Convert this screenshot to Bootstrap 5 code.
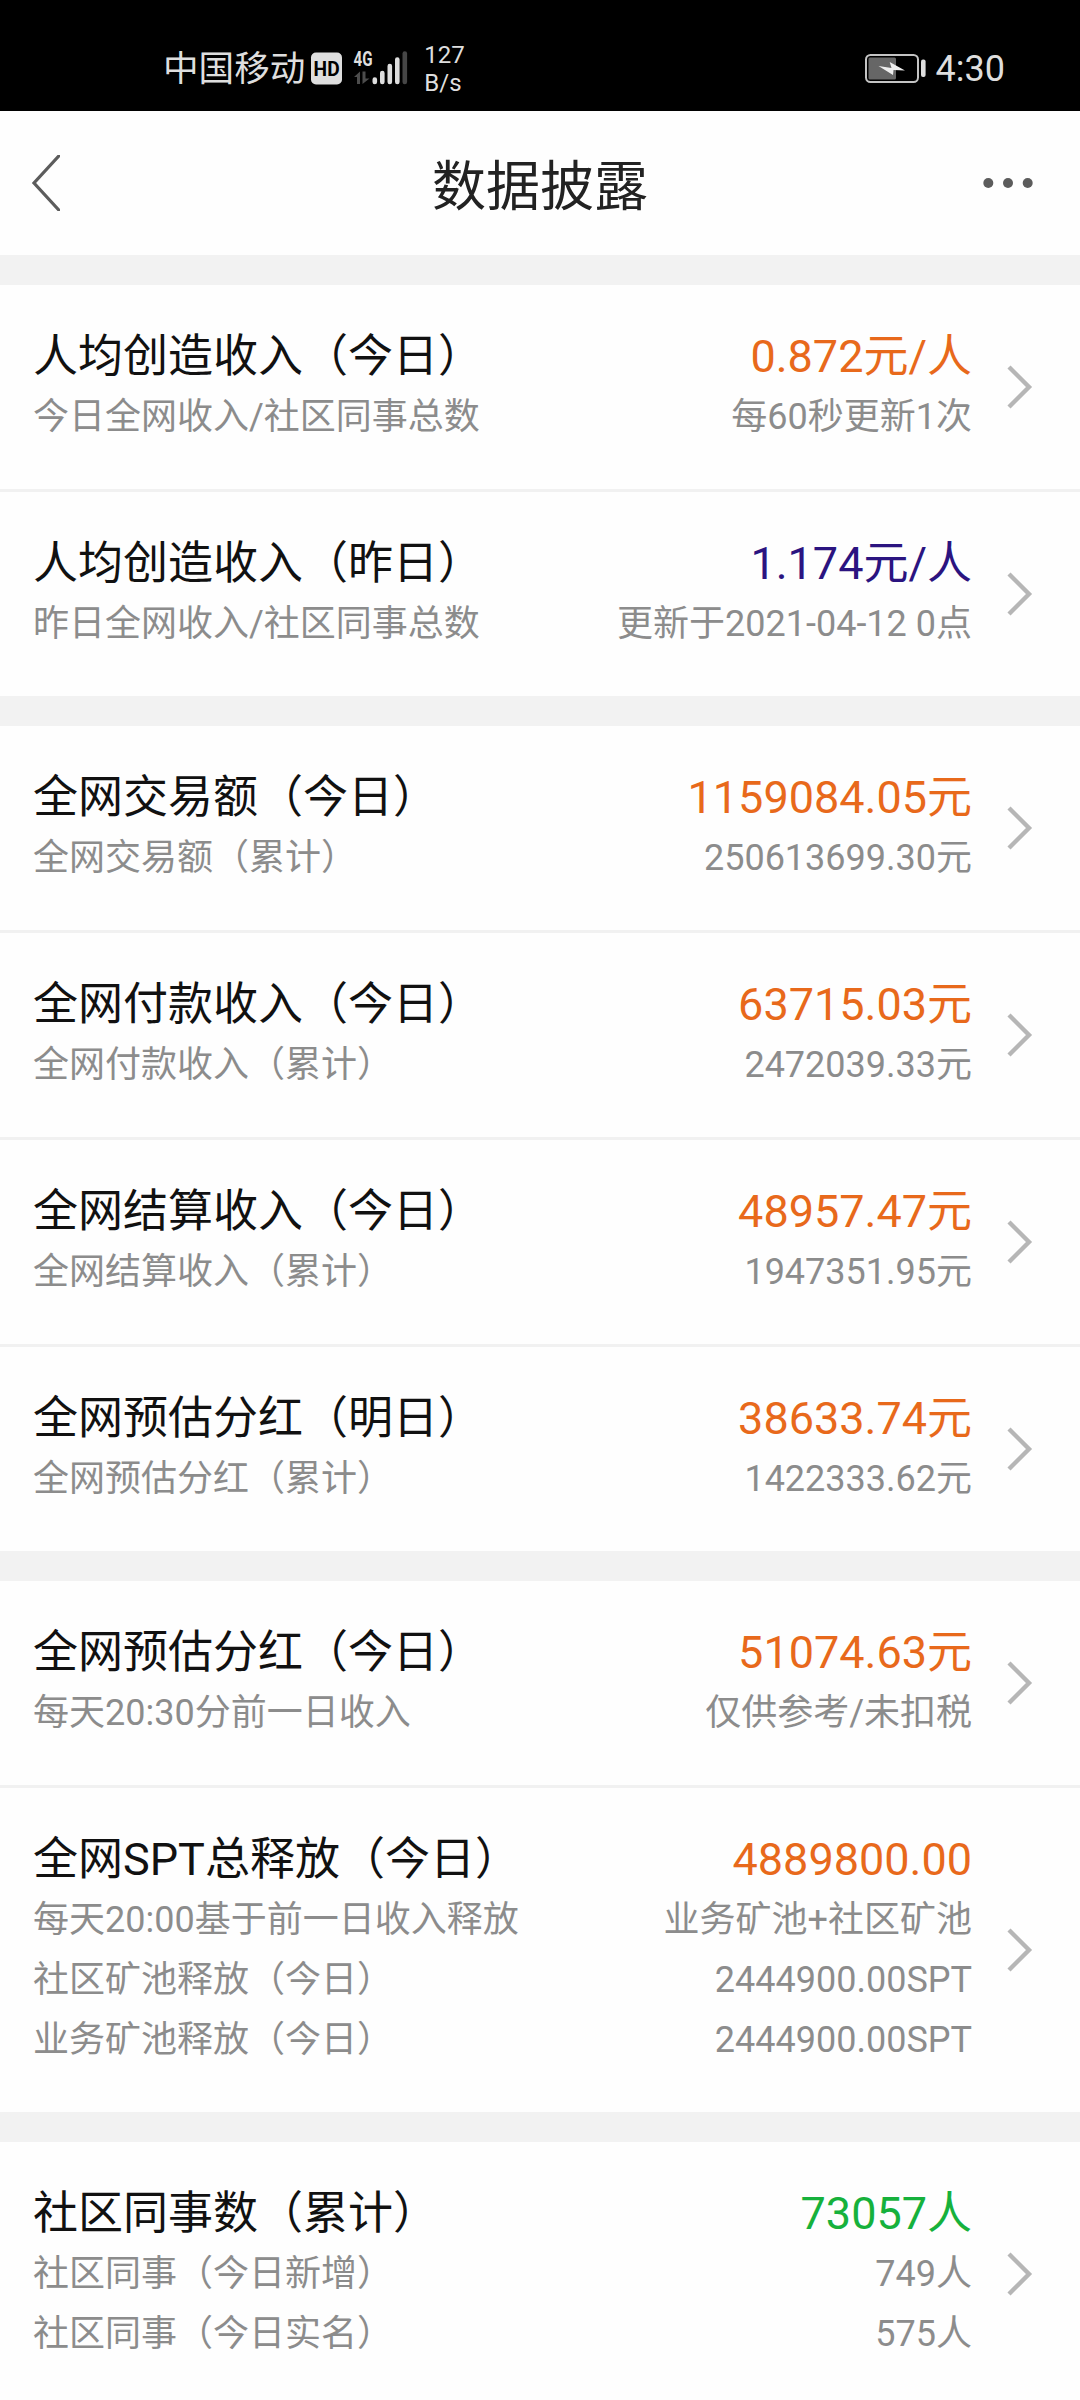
<!DOCTYPE html>
<html lang="zh-CN">
<head>
<meta charset="utf-8">
<meta name="viewport" content="width=device-width, initial-scale=1">
<title>数据披露</title>
<link href="https://cdn.jsdelivr.net/npm/bootstrap@5.3.0/dist/css/bootstrap.min.css" rel="stylesheet">
<style>
  body { font-family: Roboto, "Noto Sans CJK SC", sans-serif; background: #f2f2f2; width: 1080px; height: 2400px; overflow: hidden; }
  .status-bar { height: 111px; background: #000; color: #dedede; padding: 25px 75px 0 163px; }
  .carrier { font-size: 35.6px; line-height: 52px; margin-top: 1px; }
  .net-speed { font-size: 24px; line-height: 28px; margin: 1px 0 0 15px; }
  .clock { font-size: 36px; line-height: 52px; margin-top: 1px; }
  .title-bar { height: 144px; background: #fefefe; padding: 0 46px 0 30px; }
  .title-bar h1 { font-size: 54px; line-height: 80px; color: #222; padding: 9px 0 0 16px; }
  .side { width: 60px; }
  .block { background: #fefefe; margin-top: 30px; }
  .entry { padding: 42px 47px 42px 33px; }
  .entry + .entry { border-top: 3px solid #f1f1f1; }
  .line { height: 60px; line-height: 60px; font-size: 36px; color: #8c8c8c; white-space: nowrap; }
  .line-main { font-size: 45px; color: #111; }
  .c-orange { color: #e8691b; }
  .c-indigo { color: #2b1480; }
  .c-green { color: #16b13c; }
  .arrow { margin: 0 0 0 33px; }
</style>
</head>
<body>
<svg class="d-none" xmlns="http://www.w3.org/2000/svg">
  <symbol id="chev" viewBox="0 0 28 46"><path d="M4 3 L24 23 L4 43" fill="none" stroke="#b6b6b6" stroke-width="4.4"/></symbol>
</svg>

<div class="status-bar d-flex align-items-center justify-content-between">
  <div class="d-flex align-items-center">
    <span class="carrier">中国移动</span>
    <svg width="104" height="40" viewBox="306 48 104 40">
      <rect x="312" y="52.5" width="31" height="32" rx="5" fill="#dedede"/>
      <text x="327.6" y="76" font-family="Roboto" font-size="20" font-weight="700" text-anchor="middle" textLength="26" lengthAdjust="spacingAndGlyphs" fill="#000">HD</text>
      <text x="354.5" y="65.6" font-family="Roboto" font-size="20" font-weight="700" textLength="19" lengthAdjust="spacingAndGlyphs" fill="#dedede">4G</text>
      <path d="M355 77 L361 71.500 V84 H358 V77 Z M363.500 71.500 H366.500 V78.500 H370.500 L363.500 84 Z" fill="#4c4c4c"/>
      <g stroke-width="4.600" stroke-linecap="round" stroke="#dedede">
        <path d="M375.800 79.500V82M383.300 73V82M390.800 66V82M398.300 59.500V82"/>
        <path d="M405.800 53.500V82" stroke="#464646"/>
      </g>
    </svg>
    <div class="net-speed">127<br>B/s</div>
  </div>
  <div class="d-flex align-items-center">
    <svg width="72" height="40" viewBox="864 48 72 40">
      <rect x="866" y="55" width="52" height="27" rx="4.500" fill="none" stroke="#c4c4c4" stroke-width="2"/>
      <rect x="868.500" y="57.500" width="27.500" height="22" rx="1.500" fill="#666"/>
      <path d="M878.500 66 L891.500 68 L889.700 62 L905 70.500 L893.500 70 L893 75 Z" fill="#eee"/>
      <rect x="921" y="59.500" width="4.600" height="17.500" rx="2" fill="#dedede"/>
    </svg>
    <span class="clock">4:30</span>
  </div>
</div>

<header class="title-bar d-flex align-items-center justify-content-between">
  <div class="side">
    <svg class="d-block" width="30" height="56" viewBox="30 154 30 56"><path d="M62 151.500 L34 182 L62 212.500" fill="none" stroke="#5c5c5c" stroke-width="3.200"/></svg>
  </div>
  <h1 class="m-0 fw-normal">数据披露</h1>
  <div class="side d-flex justify-content-end">
    <svg width="52" height="12" viewBox="0 0 52 12" fill="#5c5c5c"><circle cx="6.300" cy="6" r="5"/><circle cx="26" cy="6" r="5"/><circle cx="45.700" cy="6" r="5"/></svg>
  </div>
</header>

<main>
  <section class="block">
    <div class="entry d-flex align-items-center">
      <div class="flex-grow-1">
        <div class="line line-main">人均创造收入（今日）</div>
        <div class="line">今日全网收入/社区同事总数</div>
      </div>
      <div class="text-end">
        <div class="line line-main c-orange">0.872元/人</div>
        <div class="line">每60秒更新1次</div>
      </div>
      <svg class="arrow flex-shrink-0" width="28" height="46"><use href="#chev"/></svg>
    </div>
    <div class="entry d-flex align-items-center">
      <div class="flex-grow-1">
        <div class="line line-main">人均创造收入（昨日）</div>
        <div class="line">昨日全网收入/社区同事总数</div>
      </div>
      <div class="text-end">
        <div class="line line-main c-indigo">1.174元/人</div>
        <div class="line">更新于2021-04-12 0点</div>
      </div>
      <svg class="arrow flex-shrink-0" width="28" height="46"><use href="#chev"/></svg>
    </div>
  </section>

  <section class="block">
    <div class="entry d-flex align-items-center">
      <div class="flex-grow-1">
        <div class="line line-main">全网交易额（今日）</div>
        <div class="line">全网交易额（累计）</div>
      </div>
      <div class="text-end">
        <div class="line line-main c-orange">1159084.05元</div>
        <div class="line">250613699.30元</div>
      </div>
      <svg class="arrow flex-shrink-0" width="28" height="46"><use href="#chev"/></svg>
    </div>
    <div class="entry d-flex align-items-center">
      <div class="flex-grow-1">
        <div class="line line-main">全网付款收入（今日）</div>
        <div class="line">全网付款收入（累计）</div>
      </div>
      <div class="text-end">
        <div class="line line-main c-orange">63715.03元</div>
        <div class="line">2472039.33元</div>
      </div>
      <svg class="arrow flex-shrink-0" width="28" height="46"><use href="#chev"/></svg>
    </div>
    <div class="entry d-flex align-items-center">
      <div class="flex-grow-1">
        <div class="line line-main">全网结算收入（今日）</div>
        <div class="line">全网结算收入（累计）</div>
      </div>
      <div class="text-end">
        <div class="line line-main c-orange">48957.47元</div>
        <div class="line">1947351.95元</div>
      </div>
      <svg class="arrow flex-shrink-0" width="28" height="46"><use href="#chev"/></svg>
    </div>
    <div class="entry d-flex align-items-center">
      <div class="flex-grow-1">
        <div class="line line-main">全网预估分红（明日）</div>
        <div class="line">全网预估分红（累计）</div>
      </div>
      <div class="text-end">
        <div class="line line-main c-orange">38633.74元</div>
        <div class="line">1422333.62元</div>
      </div>
      <svg class="arrow flex-shrink-0" width="28" height="46"><use href="#chev"/></svg>
    </div>
  </section>

  <section class="block">
    <div class="entry d-flex align-items-center">
      <div class="flex-grow-1">
        <div class="line line-main">全网预估分红（今日）</div>
        <div class="line">每天20:30分前一日收入</div>
      </div>
      <div class="text-end">
        <div class="line line-main c-orange">51074.63元</div>
        <div class="line">仅供参考/未扣税</div>
      </div>
      <svg class="arrow flex-shrink-0" width="28" height="46"><use href="#chev"/></svg>
    </div>
    <div class="entry d-flex align-items-center">
      <div class="flex-grow-1">
        <div class="line line-main">全网SPT总释放（今日）</div>
        <div class="line">每天20:00基于前一日收入释放</div>
        <div class="line">社区矿池释放（今日）</div>
        <div class="line">业务矿池释放（今日）</div>
      </div>
      <div class="text-end">
        <div class="line line-main c-orange">4889800.00</div>
        <div class="line">业务矿池+社区矿池</div>
        <div class="line">2444900.00SPT</div>
        <div class="line">2444900.00SPT</div>
      </div>
      <svg class="arrow flex-shrink-0" width="28" height="46"><use href="#chev"/></svg>
    </div>
  </section>

  <section class="block">
    <div class="entry d-flex align-items-center">
      <div class="flex-grow-1">
        <div class="line line-main">社区同事数（累计）</div>
        <div class="line">社区同事（今日新增）</div>
        <div class="line">社区同事（今日实名）</div>
      </div>
      <div class="text-end">
        <div class="line line-main c-green">73057人</div>
        <div class="line">749人</div>
        <div class="line">575人</div>
      </div>
      <svg class="arrow flex-shrink-0" width="28" height="46"><use href="#chev"/></svg>
    </div>
  </section>
</main>
<script src="https://cdn.jsdelivr.net/npm/bootstrap@5.3.0/dist/js/bootstrap.bundle.min.js"></script>
</body>
</html>
